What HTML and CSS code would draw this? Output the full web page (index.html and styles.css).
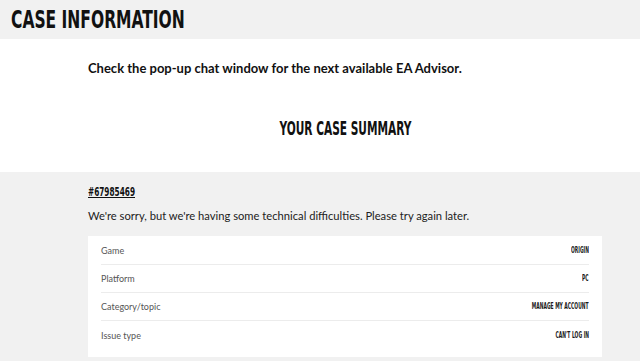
FILE: index.html
```html
<!DOCTYPE html>
<html lang="en">
<head>
  <meta charset="UTF-8" />
  <meta name="viewport" content="width=device-width, initial-scale=1" />
  <title>Case Information</title>
  <link rel="stylesheet" href="styles.css">
</head>
<body>
  <header class="page-head">
    <h1 class="condensed">CASE INFORMATION</h1>
  </header>

  <section class="intro">
    <div class="wrap">
      <p class="notice">Check the pop-up chat window for the next available EA Advisor.</p>
      <h2 class="summary-title"><span class="condensed">YOUR CASE SUMMARY</span></h2>
    </div>
  </section>

  <section class="summary">
    <div class="wrap">
      <div class="case-line">
        <a href="#" class="case-id condensed">#67985469</a>
      </div>
      <p class="error">We're sorry, but we're having some technical difficulties. Please try again later.</p>

      <div class="card">
        <div class="row">
          <span class="label">Game</span>
          <span class="value condensed">ORIGIN</span>
        </div>
        <div class="row">
          <span class="label">Platform</span>
          <span class="value condensed">PC</span>
        </div>
        <div class="row">
          <span class="label">Category/topic</span>
          <span class="value condensed">MANAGE MY ACCOUNT</span>
        </div>
        <div class="row">
          <span class="label">Issue type</span>
          <span class="value condensed">CAN'T LOG IN</span>
        </div>
      </div>
    </div>
  </section>
</body>
</html>
```

FILE: styles.css
```css
* {
  margin: 0;
  padding: 0;
  box-sizing: border-box;
}

body, html {
  height: 100%;
  font-family: Lato, "Open Sans", Arial, sans-serif;
  color: #111;
}

body {
  background-color: #f1f1f1;
}

.condensed {
  display: inline-block;
  font-family: "DejaVu Sans Condensed", "DejaVu Sans", sans-serif;
  font-weight: bold;
  transform: scaleX(0.68);
  transform-origin: left center;
  white-space: nowrap;
}

.page-head {
  height: 39px;
  background-color: #f1f1f1;
  padding-left: 11px;
  display: flex;
  align-items: center;
}

.page-head h1 {
  font-size: 25px;
  line-height: 1;
  color: #111;
  transform: scaleX(0.69);
}

.intro {
  background-color: #fff;
  height: 133px;
}

.wrap {
  margin-left: 88px;
  width: 514px;
}

.notice {
  padding-top: 20px;
  font-size: 13px;
  font-weight: bold;
  line-height: 18px;
}

.summary-title {
  margin-top: 41px;
  text-align: center;
  font-size: 19px;
  line-height: 1;
}

.summary-title .condensed {
  transform: scaleX(0.62);
  transform-origin: center center;
}

.summary {
  padding-top: 12px;
}

.case-line {
  font-size: 12px;
  line-height: 16px;
  height: 16px;
}

.case-id {
  color: #111;
  text-decoration: underline;
}

.error {
  margin-top: 8px;
  font-size: 11.2px;
  line-height: 16px;
  color: #222;
}

.card {
  margin-top: 12px;
  background-color: #fff;
  padding: 1px 13px 8px;
}

.row {
  height: 28px;
  display: flex;
  justify-content: space-between;
  align-items: center;
  border-bottom: 1px solid #ececec;
}

.row:last-child {
  border-bottom: none;
}

.label {
  font-size: 9px;
  color: #555;
}

.value {
  font-size: 8px;
  color: #1a1a1a;
  transform: scaleX(0.62);
  transform-origin: right center;
}
```
